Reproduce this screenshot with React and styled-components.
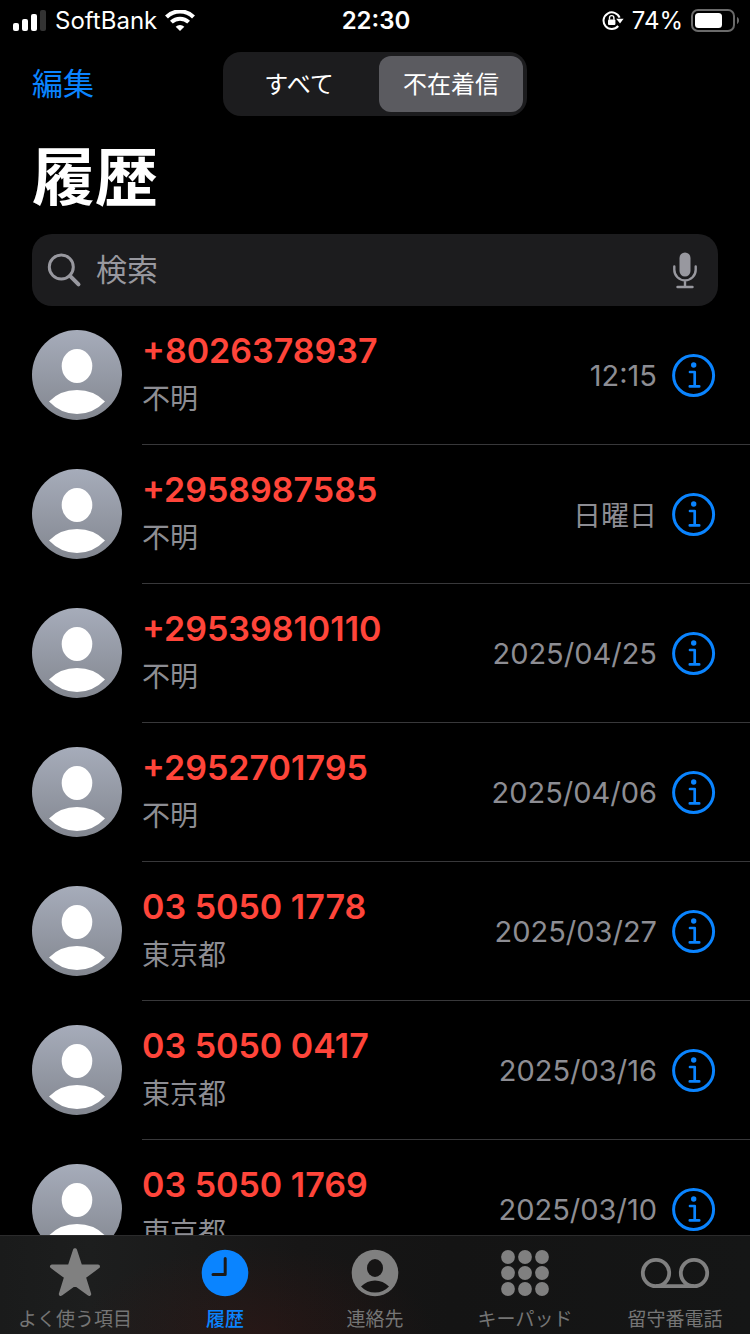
import React, { useState } from 'react';
import styled, { createGlobalStyle } from 'styled-components';

const GlobalStyle = createGlobalStyle`
  * {
    box-sizing: border-box;
  }

  body {
    margin: 0;
    background-color: #000;
    color: #fff;
    font-family: Inter, 'Noto Sans CJK JP', sans-serif;
  }

  button, input {
    margin: 0;
    padding: 0;
    border: 0;
    background: none;
    color: inherit;
    font-family: inherit;
  }

  svg {
    display: block;
    flex-shrink: 0;
  }
`;

const Screen = styled.div`
  display: flex;
  flex-direction: column;
  height: 100vh;
  overflow: hidden;
`;

const StatusBar = styled.div`
  display: grid;
  grid-template-columns: 1fr auto 1fr;
  align-items: center;
  height: 40px;
  padding: 0 11px 0 13px;
  font-size: 24px;
  line-height: 42px;
`;

const StatusGroup = styled.div`
  display: flex;
  align-items: center;
  justify-content: ${props => props.$end ? 'flex-end' : 'flex-start'};
  gap: 8px;
`;

const Clock = styled.time`
  font-weight: 600;
`;

const Header = styled.header`
  display: grid;
  grid-template-columns: 1fr auto 1fr;
  align-items: center;
  padding: 12px 32px 0;
`;

const EditButton = styled.button`
  justify-self: start;
  color: #0a84ff;
  font-size: 31px;
  line-height: 44px;
  cursor: pointer;
`;

const Segments = styled.div`
  display: flex;
  gap: 8px;
  padding: 4px;
  border-radius: 18px;
  background-color: #1c1c1e;
`;

const SegmentButton = styled.button`
  width: 144px;
  height: 56px;
  padding-bottom: 4px;
  border-radius: 12px;
  background-color: ${props => props.$selected ? '#5b5b60' : 'transparent'};
  font-size: 24px;
  font-weight: 400;
  cursor: pointer;
`;

const Title = styled.h1`
  margin: 0;
  padding: 16px 32px 12px;
  font-size: 63px;
  font-weight: 700;
  line-height: 90px;
`;

const SearchField = styled.div`
  display: flex;
  flex-shrink: 0;
  align-items: center;
  gap: 14px;
  height: 72px;
  margin: 0 32px;
  padding: 0 18px 0 14px;
  border-radius: 20px;
  background-color: #1c1c1e;
`;

const SearchInput = styled.input`
  flex: 1;
  min-width: 0;
  font-size: 31px;
  line-height: 44px;
  outline: none;

  &::placeholder {
    color: #98989f;
    opacity: 1;
  }
`;

const IconButton = styled.button`
  display: block;
  flex-shrink: 0;
  cursor: pointer;
`;

const CallList = styled.ul`
  flex: 1;
  min-height: 0;
  margin: 0;
  padding: 0;
  overflow: hidden;
  list-style: none;
`;

const CallRow = styled.li`
  display: flex;
  gap: 20px;
  height: 139px;
  padding-left: 32px;
`;

const AvatarPicture = styled.svg`
  width: 90px;
  height: 90px;
  margin-top: 24px;
`;

const CallBody = styled.div`
  display: flex;
  flex: 1;
  align-items: center;
  gap: 15px;
  padding-right: 34px;
  border-bottom: 1px solid #38383a;
`;

const Caller = styled.div`
  flex: 1;
`;

const CallerNumber = styled.div`
  color: #ff453a;
  font-size: 34px;
  font-weight: 600;
  line-height: 48px;
`;

const CallerPlace = styled.div`
  color: #8d8d93;
  font-size: 28px;
  line-height: 48px;
`;

const CallDate = styled.time`
  color: #8d8d93;
  font-size: ${props => props.$weekday ? '28px' : '29px'};
`;

const TabBar = styled.nav`
  display: grid;
  flex-shrink: 0;
  grid-template-columns: repeat(5, 1fr);
  height: 99px;
  border-top: 1px solid #2b2b2c;
  background:
    radial-gradient(ellipse 24% 90% at 34% 100%, rgba(60, 24, 20, 0.4), transparent),
    linear-gradient(90deg, #1a1b1b, #1d1e1e 12%, #171616 40%, #141414 60%, #151616);
`;

const TabButton = styled.button`
  display: flex;
  flex-direction: column;
  align-items: center;
  padding-top: 11px;
  gap: 9px;
  color: ${props => props.$active ? '#0a84ff' : '#808080'};
  cursor: pointer;
`;

const TabLabel = styled.span`
  color: ${props => props.$active ? '#0a84ff' : '#757575'};
  font-size: 19px;
  font-weight: ${props => props.$active ? 500 : 400};
  line-height: 28px;
  white-space: nowrap;
`;

const SignalIcon = () => (
  <svg width="34" height="22" viewBox="0 0 34 22" fill="#fff">
    <rect x="0" y="13" width="6" height="8" rx="2" />
    <rect x="9" y="9" width="6" height="12" rx="2" />
    <rect x="18" y="4" width="6" height="17" rx="2" />
    <rect x="27" y="0" width="6" height="21" rx="2" fill="#333" />
  </svg>
);

const WifiIcon = () => (
  <svg width="30" height="22" viewBox="0 0 30 22" fill="none" stroke="#fff">
    <path d="M1.5 6.9a19.5 19.5 0 0 1 27 0" strokeWidth="4.2" />
    <path d="M6.4 12.1a12.4 12.4 0 0 1 17.2 0" strokeWidth="4" />
    <path d="M15 21l-4.3-4.3a6.2 6.2 0 0 1 8.6 0z" fill="#fff" stroke="none" />
  </svg>
);

const RotationLockIcon = () => (
  <svg width="22" height="20" viewBox="0 0 22 20" fill="none" stroke="#fff">
    <path d="M17.6 6.700A8.300 8.300 0 1 0 16.200 15" strokeWidth="2" />
    <path d="M14.200 7.700h7.400l-3.600 4.800z" fill="#fff" stroke="none" />
    <rect x="6" y="8.400" width="7.400" height="5.600" rx="1" fill="#fff" stroke="none" />
    <path d="M7.500 8.700V6.800a2.200 2.200 0 0 1 4.400 0v1.900" strokeWidth="1.400" />
  </svg>
);

const BatteryIcon = () => (
  <svg width="48" height="24" viewBox="0 0 48 24">
    <rect x="1" y="1" width="42" height="21" rx="6" fill="none" stroke="#6a6a6a" strokeWidth="2" />
    <rect x="4" y="4" width="27" height="15" rx="3.500" fill="#fff" />
    <path d="M46 8c1.200.6 2 1.900 2 3.500s-.8 2.900-2 3.500z" fill="#6a6a6a" />
  </svg>
);

const SearchIcon = () => (
  <svg width="36" height="36" viewBox="0 0 36 36" fill="none" stroke="#98989f" strokeWidth="3">
    <circle cx="15.300" cy="15" r="12" />
    <path d="M24 23.800l8.500 8.500" strokeWidth="4" strokeLinecap="round" />
  </svg>
);

const MicIcon = () => (
  <svg width="30" height="38" viewBox="0 0 30 38" fill="none" stroke="#98989f" strokeLinecap="round">
    <rect x="9.500" y="1.500" width="11" height="24" rx="5.500" fill="#98989f" stroke="none" />
    <path d="M4.300 15.500v3.200a10.700 10.700 0 0 0 21.400 0v-3.200M15 30v6M7.500 36h15" strokeWidth="2.400" />
  </svg>
);

const Avatar = () => (
  <AvatarPicture viewBox="0 0 90 90">
    <defs>
      <linearGradient id="avatarFill" x1="0" y1="0" x2="0" y2="1">
        <stop offset="0" stopColor="#a6acba" />
        <stop offset="1" stopColor="#838790" />
      </linearGradient>
    </defs>
    <circle cx="45" cy="45" r="45" fill="url(#avatarFill)" />
    <ellipse cx="45" cy="36" rx="15.300" ry="17" fill="#fff" />
    <path d="M17 71.500Q28 60 45 60T73 71.500Q61 84 45 84T17 71.500z" fill="#fff" />
  </AvatarPicture>
);

const InfoIcon = () => (
  <svg width="44" height="44" viewBox="0 0 44 44" fill="none" stroke="#0a84ff">
    <circle cx="21.600" cy="22.500" r="20" strokeWidth="3" />
    <circle cx="21.700" cy="12" r="2.700" fill="#0a84ff" stroke="none" />
    <path d="M18 19h4.700v14.200M17.800 33.400h9.400" strokeWidth="2.700" strokeLinecap="round" strokeLinejoin="round" />
  </svg>
);

const StarIcon = () => (
  <svg width="52" height="50" viewBox="0 0 52 50" fill="currentColor" stroke="currentColor" strokeWidth="4" strokeLinejoin="round">
    <path d="M26 3.200L31.300 19.400L49 19.500L34.900 30L40.200 47L26 36.700L11.800 47L17.100 30L3 19.500L20.700 19.400z" />
  </svg>
);

const ClockIcon = () => (
  <svg width="48" height="50" viewBox="0 0 48 50">
    <circle cx="24" cy="26" r="23.300" fill="currentColor" />
    <path d="M24.200 11.500v16H12" fill="none" stroke="#1b1a1a" strokeWidth="3" strokeLinecap="round" strokeLinejoin="round" />
  </svg>
);

const ContactIcon = () => (
  <svg width="48" height="50" viewBox="0 0 48 50">
    <circle cx="24" cy="26" r="23.300" fill="currentColor" />
    <ellipse cx="24" cy="21" rx="8" ry="9" fill="#161515" />
    <path d="M10 39.500Q16 33.500 24 33.500T38 39.500Q32.500 45.500 24 45.500T10 39.500z" fill="#161515" />
  </svg>
);

const KeypadIcon = () => (
  <svg width="48" height="50" viewBox="0 0 48 50" fill="currentColor">
    {
      [10, 26, 42].map(y => (
        [7, 24, 41].map(x => <circle key={`${x}-${y}`} cx={x} cy={y} r="6.900" />)
      ))
    }
  </svg>
);

const VoicemailIcon = () => (
  <svg width="70" height="50" viewBox="0 0 70 50" fill="none" stroke="currentColor" strokeWidth="3.800">
    <circle cx="16" cy="26" r="13.200" />
    <circle cx="54" cy="26" r="13.200" />
    <path d="M16 39.200h38" />
  </svg>
);

const calls = [
  { id: 1, number: '+8026378937', place: '不明', date: '12:15' },
  { id: 2, number: '+2958987585', place: '不明', date: '日曜日', weekday: true },
  { id: 3, number: '+29539810110', place: '不明', date: '2025/04/25' },
  { id: 4, number: '+2952701795', place: '不明', date: '2025/04/06' },
  { id: 5, number: '03 5050 1778', place: '東京都', date: '2025/03/27' },
  { id: 6, number: '03 5050 0417', place: '東京都', date: '2025/03/16' },
  { id: 7, number: '03 5050 1769', place: '東京都', date: '2025/03/10' },
];

const segments = ['すべて', '不在着信'];

const tabs = [
  { name: 'よく使う項目', Icon: StarIcon },
  { name: '履歴', Icon: ClockIcon },
  { name: '連絡先', Icon: ContactIcon },
  { name: 'キーパッド', Icon: KeypadIcon },
  { name: '留守番電話', Icon: VoicemailIcon },
];

const App = () => {
  const [segment, setSegment] = useState('不在着信');
  const [tab, setTab] = useState('履歴');
  const [query, setQuery] = useState('');

  return (
    <Screen>
      <GlobalStyle />
      <StatusBar>
        <StatusGroup>
          <SignalIcon />
          <span>SoftBank</span>
          <WifiIcon />
        </StatusGroup>
        <Clock>22:30</Clock>
        <StatusGroup $end>
          <RotationLockIcon />
          <span>74%</span>
          <BatteryIcon />
        </StatusGroup>
      </StatusBar>
      <Header>
        <EditButton type="button">編集</EditButton>
        <Segments>
          {
            segments.map(name => (
              <SegmentButton
                key={name}
                type="button"
                aria-pressed={name === segment}
                $selected={name === segment}
                onClick={() => setSegment(name)}
              >
                {name}
              </SegmentButton>
            ))
          }
        </Segments>
      </Header>
      <Title>履歴</Title>
      <SearchField>
        <SearchIcon />
        <SearchInput
          type="text"
          aria-label="検索"
          placeholder="検索"
          value={query}
          onChange={e => setQuery(e.target.value)}
        />
        <IconButton type="button" aria-label="音声入力">
          <MicIcon />
        </IconButton>
      </SearchField>
      <CallList>
        {
          calls.map(({ id, number, place, date, weekday }) => (
            <CallRow key={id}>
              <Avatar />
              <CallBody>
                <Caller>
                  <CallerNumber>{number}</CallerNumber>
                  <CallerPlace>{place}</CallerPlace>
                </Caller>
                <CallDate $weekday={weekday}>{date}</CallDate>
                <IconButton type="button" aria-label={`${number} の詳細`}>
                  <InfoIcon />
                </IconButton>
              </CallBody>
            </CallRow>
          ))
        }
      </CallList>
      <TabBar>
        {
          tabs.map(({ name, Icon }) => (
            <TabButton
              key={name}
              type="button"
              $active={name === tab}
              onClick={() => setTab(name)}
            >
              <Icon />
              <TabLabel $active={name === tab}>{name}</TabLabel>
            </TabButton>
          ))
        }
      </TabBar>
    </Screen>
  );
};

export default App;
